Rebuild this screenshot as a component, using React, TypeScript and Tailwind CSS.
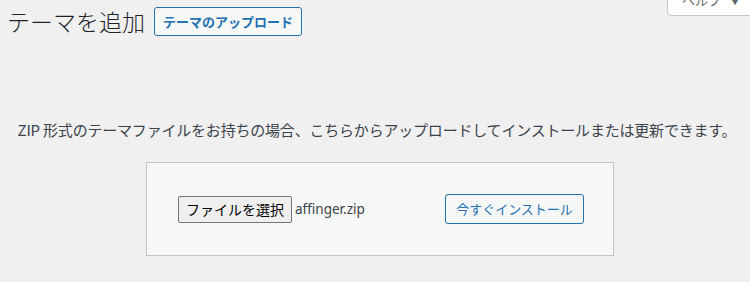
const jp = "font-['Noto_Sans_CJK_JP','Noto_Sans',sans-serif]";

export default function App() {
  return (
    <div className={`relative h-[282px] w-[750px] overflow-hidden bg-[#f0f0f1] text-[#3c434a] ${jp}`}>
      <div className="absolute left-[667px] top-[-10px] h-[26px] w-[100px] rounded-b-[4px] border border-[#c3c4c7] bg-white pl-[14px] pt-[2px] text-[13px] leading-[14px] text-[#646970]">
        ヘルプ <span className="ml-[6px] text-[10px]">▼</span>
      </div>

      <div className="flex items-center gap-[9px] pl-[7px] pt-[7px]">
        <h1 className="text-[23px] font-light leading-[29px] text-[#1d2327]">テーマを追加</h1>
        <button className="h-[29px] rounded-[3px] border border-[#2271b1] bg-[#f6f7f7] px-[8px] text-[13px] font-semibold leading-[27px] text-[#2271b1]">
          テーマのアップロード
        </button>
      </div>

      <p className="mt-[84px] pl-[4px] text-center text-[15px] leading-[20px] tracking-[-0.2px] text-[#3c434a]">
        ZIP 形式のテーマファイルをお持ちの場合、こちらからアップロードしてインストールまたは更新できます。
      </p>

      <div className="ml-[146px] mt-[22px] flex h-[94px] w-[468px] items-center border border-[#c3c4c7] bg-[#f6f7f7] pl-[31px]">
        <div className="flex w-[267px] items-center">
          <button className="h-[27px] rounded-[2px] border border-[#767676] bg-[#efefef] px-[7px] text-[14px] leading-[25px] text-black">
            ファイルを選択
          </button>
          <span className="ml-[3px] font-['Noto_Sans',sans-serif] text-[13.5px] text-[#3c434a]">affinger.zip</span>
        </div>
        <button className="h-[30px] w-[139px] rounded-[3px] border border-[#2271b1] bg-[#f6f7f7] text-[13px] leading-[28px] text-[#2271b1]">
          今すぐインストール
        </button>
      </div>
    </div>
  );
}
